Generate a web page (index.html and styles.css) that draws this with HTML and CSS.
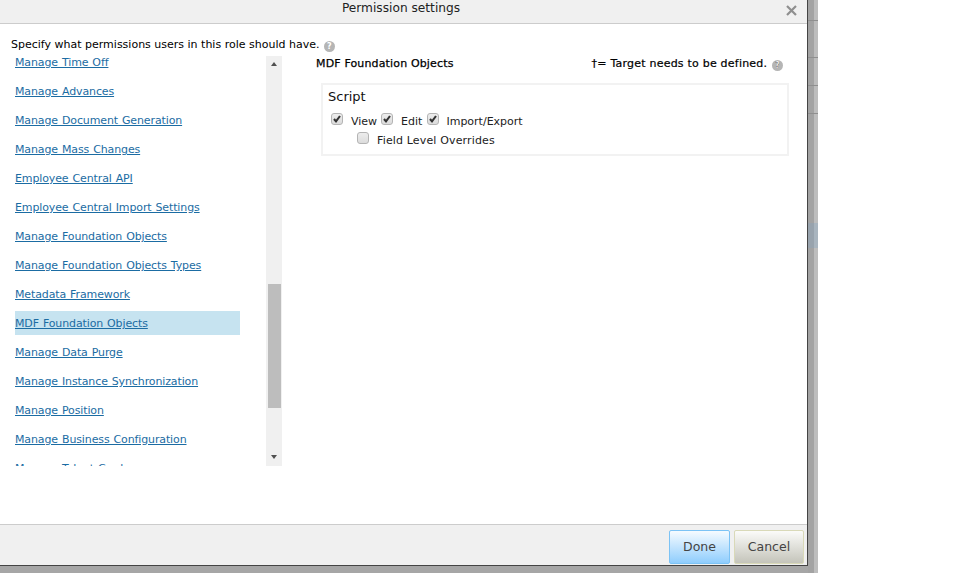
FILE: index.html
```html
<!DOCTYPE html>
<html lang="en">
<head>
<meta charset="utf-8">
<title>Permission settings</title>
<link rel="stylesheet" href="styles.css">
</head>
<body>
<div class="backdrop">
  <div class="dialog">
    <header class="head">
      <h1 class="title">Permission settings</h1>
      <button class="close" aria-label="Close"><svg width="11" height="11" viewBox="0 0 11 11"><path d="M1 1l9 9M10 1l-9 9" stroke="#8f8f8f" stroke-width="2.2" fill="none"/></svg></button>
    </header>
    <main class="body">
      <p class="intro">Specify what permissions users in this role should have. <span class="help">?</span></p>
      <div class="columns">
        <div class="listwrap">
          <ul class="list">
            <li><a href="#">Manage Time Off</a></li>
            <li><a href="#">Manage Advances</a></li>
            <li><a href="#">Manage Document Generation</a></li>
            <li><a href="#">Manage Mass Changes</a></li>
            <li><a href="#">Employee Central API</a></li>
            <li><a href="#">Employee Central Import Settings</a></li>
            <li><a href="#">Manage Foundation Objects</a></li>
            <li><a href="#">Manage Foundation Objects Types</a></li>
            <li><a href="#">Metadata Framework</a></li>
            <li class="active"><a href="#">MDF Foundation Objects</a></li>
            <li><a href="#">Manage Data Purge</a></li>
            <li><a href="#">Manage Instance Synchronization</a></li>
            <li><a href="#">Manage Position</a></li>
            <li><a href="#">Manage Business Configuration</a></li>
            <li><a href="#">Manage Talent Card</a></li>
          </ul>
          <div class="scrollbar">
            <span class="arrow up"></span>
            <span class="thumb"></span>
            <span class="arrow down"></span>
          </div>
        </div>
        <section class="detail">
          <div class="detail-head">
            <h2 class="detail-title">MDF Foundation Objects</h2>
            <span class="note">†= Target needs to be defined. <span class="help">?</span></span>
          </div>
          <div class="panel">
            <h3 class="panel-title">Script</h3>
            <div class="row">
              <input type="checkbox" class="cb" checked><label class="lbl first">View</label>
              <input type="checkbox" class="cb" checked><label class="lbl">Edit</label>
              <input type="checkbox" class="cb" checked><label class="lbl">Import/Export</label>
            </div>
            <div class="row sub">
              <input type="checkbox" class="cb"><label class="lbl">Field Level Overrides</label>
            </div>
          </div>
        </section>
      </div>
    </main>
    <footer class="foot">
      <button class="btn done">Done</button>
      <button class="btn cancel">Cancel</button>
    </footer>
  </div>
  <div class="strip">
    <i class="seg s1"></i><i class="seg s2"></i><i class="seg s3"></i><i class="seg s4"></i><i class="seg s5"></i><i class="seg tint"></i><i class="seg s6"></i>
  </div>
</div>
</body>
</html>
```

FILE: styles.css
```css
* { box-sizing: border-box; }
html, body { margin: 0; padding: 0; background: #fff; }
body { font-family: "DejaVu Sans", Verdana, sans-serif; font-size: 11px; color: #000; height: 583px; overflow: hidden; }

.backdrop { display: flex; width: 818px; height: 573px; background: #a6a6a6; align-items: flex-start; }
.dialog { width: 808px; height: 566px; display: flex; flex-direction: column; background: #fff; border-right: 1px solid #444; border-bottom: 1px solid #444; }

.head { height: 24px; flex: none; background: #f0f0f0; border-bottom: 1px solid #ccc; display: flex; justify-content: center; position: relative; }
.title { margin: 0 0 0 -5px; font-size: 12.2px; font-weight: 400; line-height: 16px; color: #222; }
.close { position: absolute; right: 10px; top: 5px; width: 11px; height: 11px; padding: 0; border: 0; background: none; display: flex; }

.body { flex: 1; min-height: 0; padding: 13px 0 0 11px; }
.intro { margin: 0; height: 19px; line-height: 15px; }
.help { display: inline-block; width: 11px; height: 11px; margin-left: 1px; border-radius: 50%; background: #b5b5b5; color: #fff; font-size: 8px; font-weight: 700; line-height: 11px; text-align: center; vertical-align: -1px; }

.columns { display: flex; }
.listwrap { display: flex; width: 271px; height: 410px; flex: none; }
.list { list-style: none; margin: 0; padding: 0; width: 255px; height: 410px; overflow: hidden; letter-spacing: -0.12px; word-spacing: 0.6px; }
.list li { margin: 0 0 5px 4px; width: 225px; height: 24px; line-height: 25px; white-space: nowrap; }
.list li:first-child { margin-top: -6px; }
.list li.active { background: #c6e3f0; }
.list a { color: #1b6ca3; text-decoration: underline; }

.scrollbar { width: 16px; height: 410px; background: #f0f0f0; position: relative; }
.thumb { position: absolute; left: 2px; top: 228px; width: 13px; height: 124px; background: #bdbdbd; }
.arrow { position: absolute; left: 5px; width: 0; height: 0; border-left: 3.5px solid transparent; border-right: 3.5px solid transparent; }
.arrow.up { top: 6px; border-bottom: 4px solid #505050; }
.arrow.down { bottom: 7px; border-top: 4px solid #505050; }

.detail { flex: none; width: 506px; padding-left: 34px; }
.detail-head { display: flex; justify-content: space-between; align-items: center; height: 15px; margin: 0 0 12px; padding-right: 5px; }
.detail-title { margin: 0; font-size: 11px; font-weight: 400; -webkit-text-stroke: 0.25px #000; letter-spacing: 0.15px; }
.note { white-space: nowrap; -webkit-text-stroke: 0.2px #000; letter-spacing: 0.22px; }
.panel { margin-left: 5px; width: 468px; height: 73px; border: 2px solid #f2f2f2; padding: 3px 0 0 5px; }
.panel-title { margin: 0 0 5px; font-size: 13px; font-weight: 400; line-height: 18px; color: #111; }
.row { display: flex; align-items: center; height: 20px; }
.row.sub { padding-left: 26px; margin-top: -1px; letter-spacing: 0.15px; }
.cb { appearance: none; width: 12px; height: 12px; margin: 0 0 5px 3px; border: 1px solid #b4b4b4; border-radius: 3px; background: linear-gradient(#ededed, #dcdcdc); background-position: center; }
.cb:checked { background-image: url("data:image/svg+xml,%3Csvg xmlns='http://www.w3.org/2000/svg' width='10' height='10'%3E%3Cpath d='M2 5l2 2.4L8 2' stroke='%23333' stroke-width='2.1' fill='none'/%3E%3C/svg%3E"), linear-gradient(#ededed, #dcdcdc); }
.lbl { margin: 0 2px 0 8px; color: #222; }
.lbl.first { margin-right: 1px; }
.lbl:last-child { margin-left: 7px; }
.row.sub .lbl { margin-left: 8px; }

.foot { height: 41px; flex: none; background: #f0f0f0; border-top: 1px solid #ccc; display: flex; justify-content: flex-end; gap: 4px; padding: 5px 3px 0 0; }
.btn { width: 61px; height: 34px; font: 12.5px "DejaVu Sans", sans-serif; color: #444; border-radius: 2px; padding: 0 0 2px; }
.done { border: 1px solid #7cc3f5; background: linear-gradient(#f6fbff, #8fcdfd); }
.cancel { width: 70px; border: 1px solid #d9d9b8; background: linear-gradient(#fbfbf9, #c4c4ba); }

.strip { flex: 1; height: 573px; display: flex; flex-direction: column; background: linear-gradient(90deg, #a3a3a3 60%, #bdbdbd 60%); }
.seg { display: block; flex: none; border-bottom: 1px solid #8f8f8f; }
.s1 { height: 21px; }
.s2 { height: 37px; }
.s3 { height: 28px; }
.s4 { height: 28px; }
.s5 { height: 109px; border-bottom: 0; }
.tint { height: 25px; border-bottom: 0; background: linear-gradient(90deg, #98a3ad 60%, #a9b5bf 60%); }
.s6 { flex: 1; border-bottom: 0; }
```
